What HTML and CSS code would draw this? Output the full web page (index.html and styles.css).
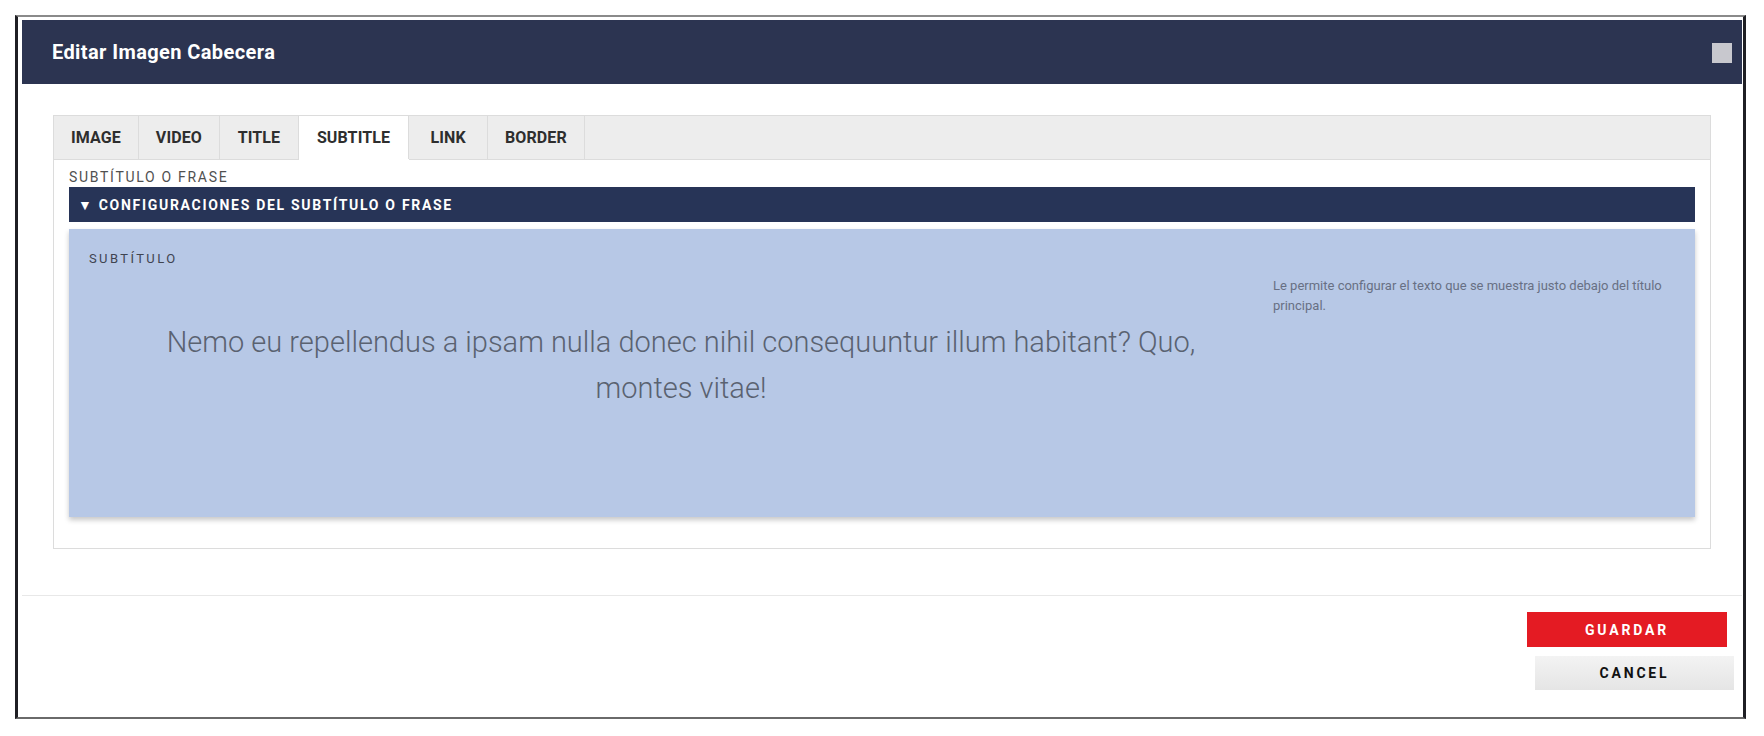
FILE: index.html
```
<!DOCTYPE html>
<html lang="es">
<head>
<meta charset="utf-8">
<title>Editar Imagen Cabecera</title>
<link rel="stylesheet" href="styles.css">
</head>
<body>
<div class="modal">
  <div class="modal-header">
    <h1 class="modal-title">Editar Imagen Cabecera</h1>
    <span class="close-box"></span>
  </div>
  <div class="modal-body">
    <div class="tabs">
      <div class="tab">IMAGE</div>
      <div class="tab">VIDEO</div>
      <div class="tab">TITLE</div>
      <div class="tab active">SUBTITLE</div>
      <div class="tab">LINK</div>
      <div class="tab">BORDER</div>
    </div>
    <div class="tab-panel">
      <div class="field-label">SUBTÍTULO O FRASE</div>
      <div class="section-bar">▼ CONFIGURACIONES DEL SUBTÍTULO O FRASE</div>
      <div class="card">
        <div class="card-label">SUBTÍTULO</div>
        <div class="card-row">
          <div class="preview">
            <p class="preview-text">Nemo eu repellendus a ipsam nulla donec nihil consequuntur illum habitant? Quo, montes vitae!</p>
          </div>
          <div class="help">Le permite configurar el texto que se muestra justo debajo del título principal.</div>
        </div>
      </div>
    </div>
  </div>
  <div class="modal-footer">
    <button class="btn btn-save">GUARDAR</button>
    <button class="btn btn-cancel">CANCEL</button>
  </div>
</div>
</body>
</html>
```
FILE: styles.css
```
* { box-sizing: border-box; }

html, body {
  margin: 0;
  background: #ffffff;
}

body {
  padding: 15px 0 0 15px;
  font-family: Roboto, "Liberation Sans", sans-serif;
}

.modal {
  width: 1731px;
  height: 704px;
  border-style: solid;
  border-width: 2px 3px 2px 3px;
  border-color: #8a8a8a #1f1f24 #6a6a6a #1f1f24;
  padding: 3px 1px 0 4px;
  display: flex;
  flex-direction: column;
  background: #fff;
}

.modal-header {
  height: 64px;
  flex: none;
  background: #2c3451;
  display: flex;
  align-items: center;
  justify-content: space-between;
  padding: 0 10px 0 30px;
}

.modal-title {
  margin: 0;
  font-size: 20px;
  font-weight: 700;
  color: #ffffff;
  letter-spacing: 0.4px;
}

.close-box {
  width: 20px;
  height: 20px;
  margin-top: 2px;
  background: #c8c8ce;
}

.modal-body {
  padding: 31px 31px 0;
  margin-bottom: 46px;
}

.tabs {
  display: flex;
  height: 45px;
  background: #ededed;
  border: 1px solid #dcdcdc;
}

.tab {
  display: flex;
  align-items: center;
  justify-content: center;
  min-width: 79px;
  padding: 0 17px;
  border-right: 1px solid #dcdcdc;
  font-size: 16px;
  font-weight: 700;
  letter-spacing: 0.1px;
  color: #2e2e2e;
}

.tab.active {
  background: #ffffff;
  padding: 0 18px;
  box-shadow: 0 1px 0 #ffffff;
}

.tab-panel {
  border: 1px solid #dcdcdc;
  border-top: 0;
  padding: 8px 15px 31px;
}

.field-label {
  font-size: 14px;
  line-height: 18px;
  letter-spacing: 1.7px;
  color: #505050;
}

.section-bar {
  margin-top: 1px;
  height: 35px;
  display: flex;
  align-items: center;
  padding-left: 9px;
  background: #273457;
  color: #ffffff;
  font-size: 14px;
  font-weight: 700;
  letter-spacing: 1.7px;
}

.card {
  margin-top: 7px;
  height: 288px;
  background: #b7c8e6;
  box-shadow: 0 3px 5px rgba(0, 0, 0, 0.22);
  padding: 22px 20px 0;
}

.card-label {
  font-size: 13px;
  line-height: 16px;
  letter-spacing: 2.4px;
  color: #3f4450;
}

.card-row {
  margin-top: 9px;
  display: grid;
  grid-template-columns: 1fr 402px;
}

.preview {
  padding: 43px 62px 0;
}

.preview-text {
  margin: 0;
  text-align: center;
  font-size: 29px;
  font-weight: 300;
  line-height: 46px;
  color: #5a6271;
}

.help {
  font-size: 13px;
  line-height: 20px;
  color: #687084;
}

.modal-footer {
  border-top: 1px solid #e8e8e8;
  padding: 16px 8px 0 0;
  display: flex;
  flex-direction: column;
  align-items: flex-end;
  gap: 9px;
}

.btn {
  border: 0;
  font-family: Roboto, "Liberation Sans", sans-serif;
  font-size: 14px;
  font-weight: 700;
  letter-spacing: 2.8px;
  padding: 0;
  cursor: pointer;
}

.btn-save {
  width: 200px;
  height: 35px;
  margin-right: 7px;
  background: #e41b23;
  color: #ffffff;
}

.btn-cancel {
  width: 199px;
  height: 34px;
  background: linear-gradient(#f3f3f3, #e5e5e5);
  color: #111111;
}
```
